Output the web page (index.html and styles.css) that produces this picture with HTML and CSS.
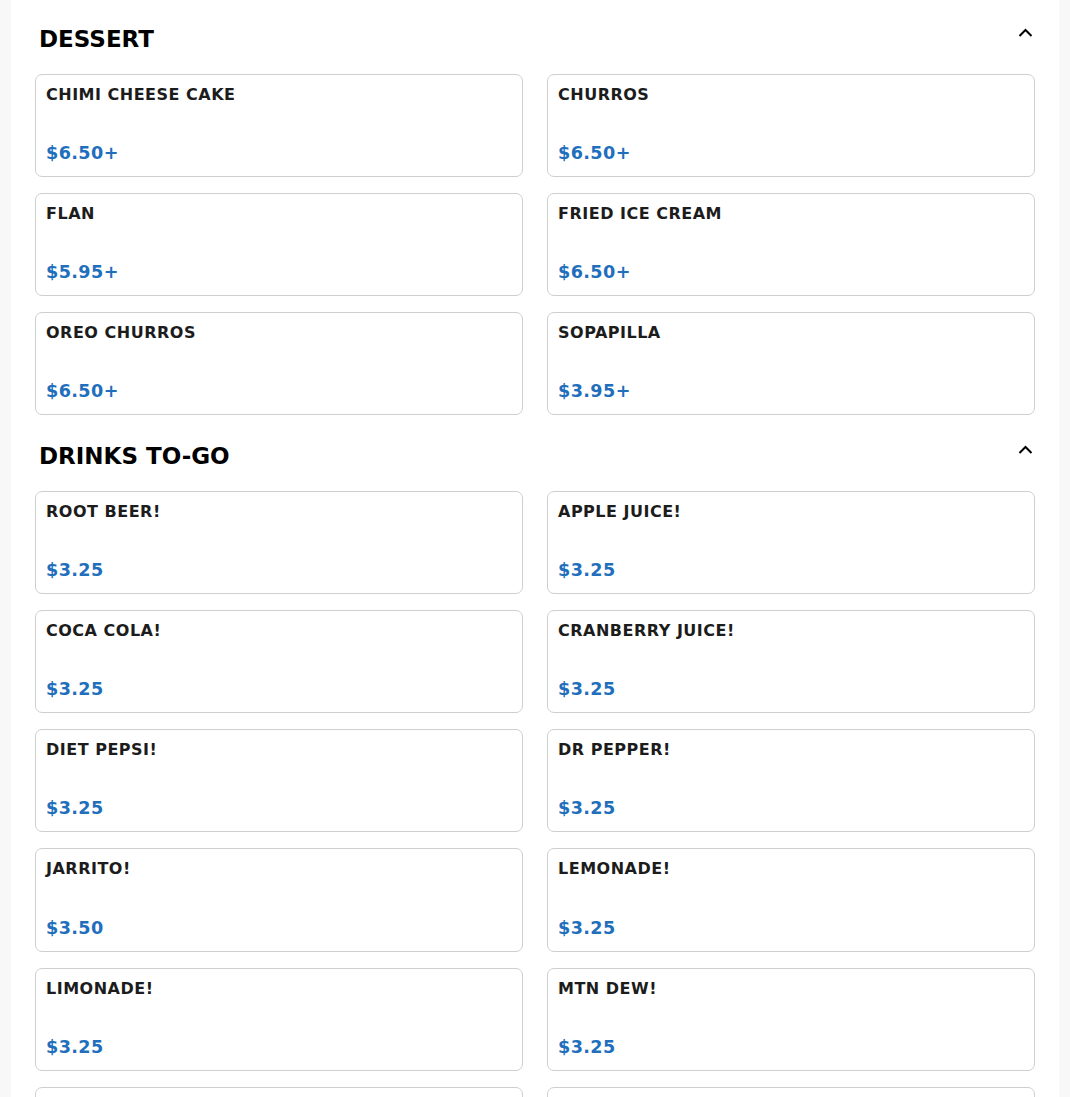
FILE: index.html
```html
<!DOCTYPE html>
<html lang="en">
<head>
    <meta charset="UTF-8">
    <meta name="viewport" content="width=device-width, initial-scale=1.0">
    <title>Menu</title>
    <link rel="stylesheet" href="styles.css">
</head>
<body>

    <div class="menu">

        <!-- Dessert -->
        <section class="category">
            <div class="category-head">
                <h2>DESSERT</h2>
                <svg class="chevron" width="15" height="9" viewBox="0 0 15 9"><polyline points="1.5,8 7.5,2 13.5,8" fill="none" stroke="#000" stroke-width="2"/></svg>
            </div>
            <div class="items">
                <div class="item"><div class="item-name">CHIMI CHEESE CAKE</div><div class="item-price">$6.50+</div></div>
                <div class="item"><div class="item-name">CHURROS</div><div class="item-price">$6.50+</div></div>
                <div class="item"><div class="item-name">FLAN</div><div class="item-price">$5.95+</div></div>
                <div class="item"><div class="item-name">FRIED ICE CREAM</div><div class="item-price">$6.50+</div></div>
                <div class="item"><div class="item-name">OREO CHURROS</div><div class="item-price">$6.50+</div></div>
                <div class="item"><div class="item-name">SOPAPILLA</div><div class="item-price">$3.95+</div></div>
            </div>
        </section>

        <!-- Drinks -->
        <section class="category">
            <div class="category-head">
                <h2>DRINKS TO-GO</h2>
                <svg class="chevron" width="15" height="9" viewBox="0 0 15 9"><polyline points="1.5,8 7.5,2 13.5,8" fill="none" stroke="#000" stroke-width="2"/></svg>
            </div>
            <div class="items">
                <div class="item"><div class="item-name">ROOT BEER!</div><div class="item-price">$3.25</div></div>
                <div class="item"><div class="item-name">APPLE JUICE!</div><div class="item-price">$3.25</div></div>
                <div class="item"><div class="item-name">COCA COLA!</div><div class="item-price">$3.25</div></div>
                <div class="item"><div class="item-name">CRANBERRY JUICE!</div><div class="item-price">$3.25</div></div>
                <div class="item"><div class="item-name">DIET PEPSI!</div><div class="item-price">$3.25</div></div>
                <div class="item"><div class="item-name">DR PEPPER!</div><div class="item-price">$3.25</div></div>
                <div class="item"><div class="item-name">JARRITO!</div><div class="item-price">$3.50</div></div>
                <div class="item"><div class="item-name">LEMONADE!</div><div class="item-price">$3.25</div></div>
                <div class="item"><div class="item-name">LIMONADE!</div><div class="item-price">$3.25</div></div>
                <div class="item"><div class="item-name">MTN DEW!</div><div class="item-price">$3.25</div></div>
                <div class="item"><div class="item-name">PEPSI!</div><div class="item-price">$3.25</div></div>
                <div class="item"><div class="item-name">SPRITE!</div><div class="item-price">$3.25</div></div>
            </div>
        </section>

    </div>

</body>
</html>
```

FILE: styles.css
```css
body {
    margin: 0;
    background-color: #f8f8f8;
    font-family: "DejaVu Sans", Verdana, sans-serif;
}
.menu {
    width: 1048px;
    box-sizing: border-box;
    margin: 0 auto;
    padding: 26px 24px 0;
    background: white;
}
.category + .category {
    margin-top: 28px;
}
.category-head {
    display: flex;
    justify-content: space-between;
    align-items: flex-start;
    padding: 0 2px 0 4px;
}
.category-head h2 {
    margin: 0;
    font-size: 23px;
    line-height: 1.2;
    color: #000;
}
.chevron {
    margin-top: 2px;
}
.items {
    display: grid;
    grid-template-columns: 1fr 1fr;
    column-gap: 24px;
    row-gap: 16px;
    margin-top: 20px;
}
.item {
    display: flex;
    flex-direction: column;
    justify-content: space-between;
    min-height: 103.2px;
    box-sizing: border-box;
    padding: 8px 10px 11px;
    border: 1px solid #cfcfcf;
    border-radius: 7px;
}
.item-name {
    font-size: 16px;
    font-weight: bold;
    line-height: 24px;
    letter-spacing: 0.5px;
    color: #1c1c1c;
}
.item-price {
    font-size: 17.6px;
    font-weight: bold;
    line-height: 24px;
    letter-spacing: 0.4px;
    color: #1f6fbd;
}
```
